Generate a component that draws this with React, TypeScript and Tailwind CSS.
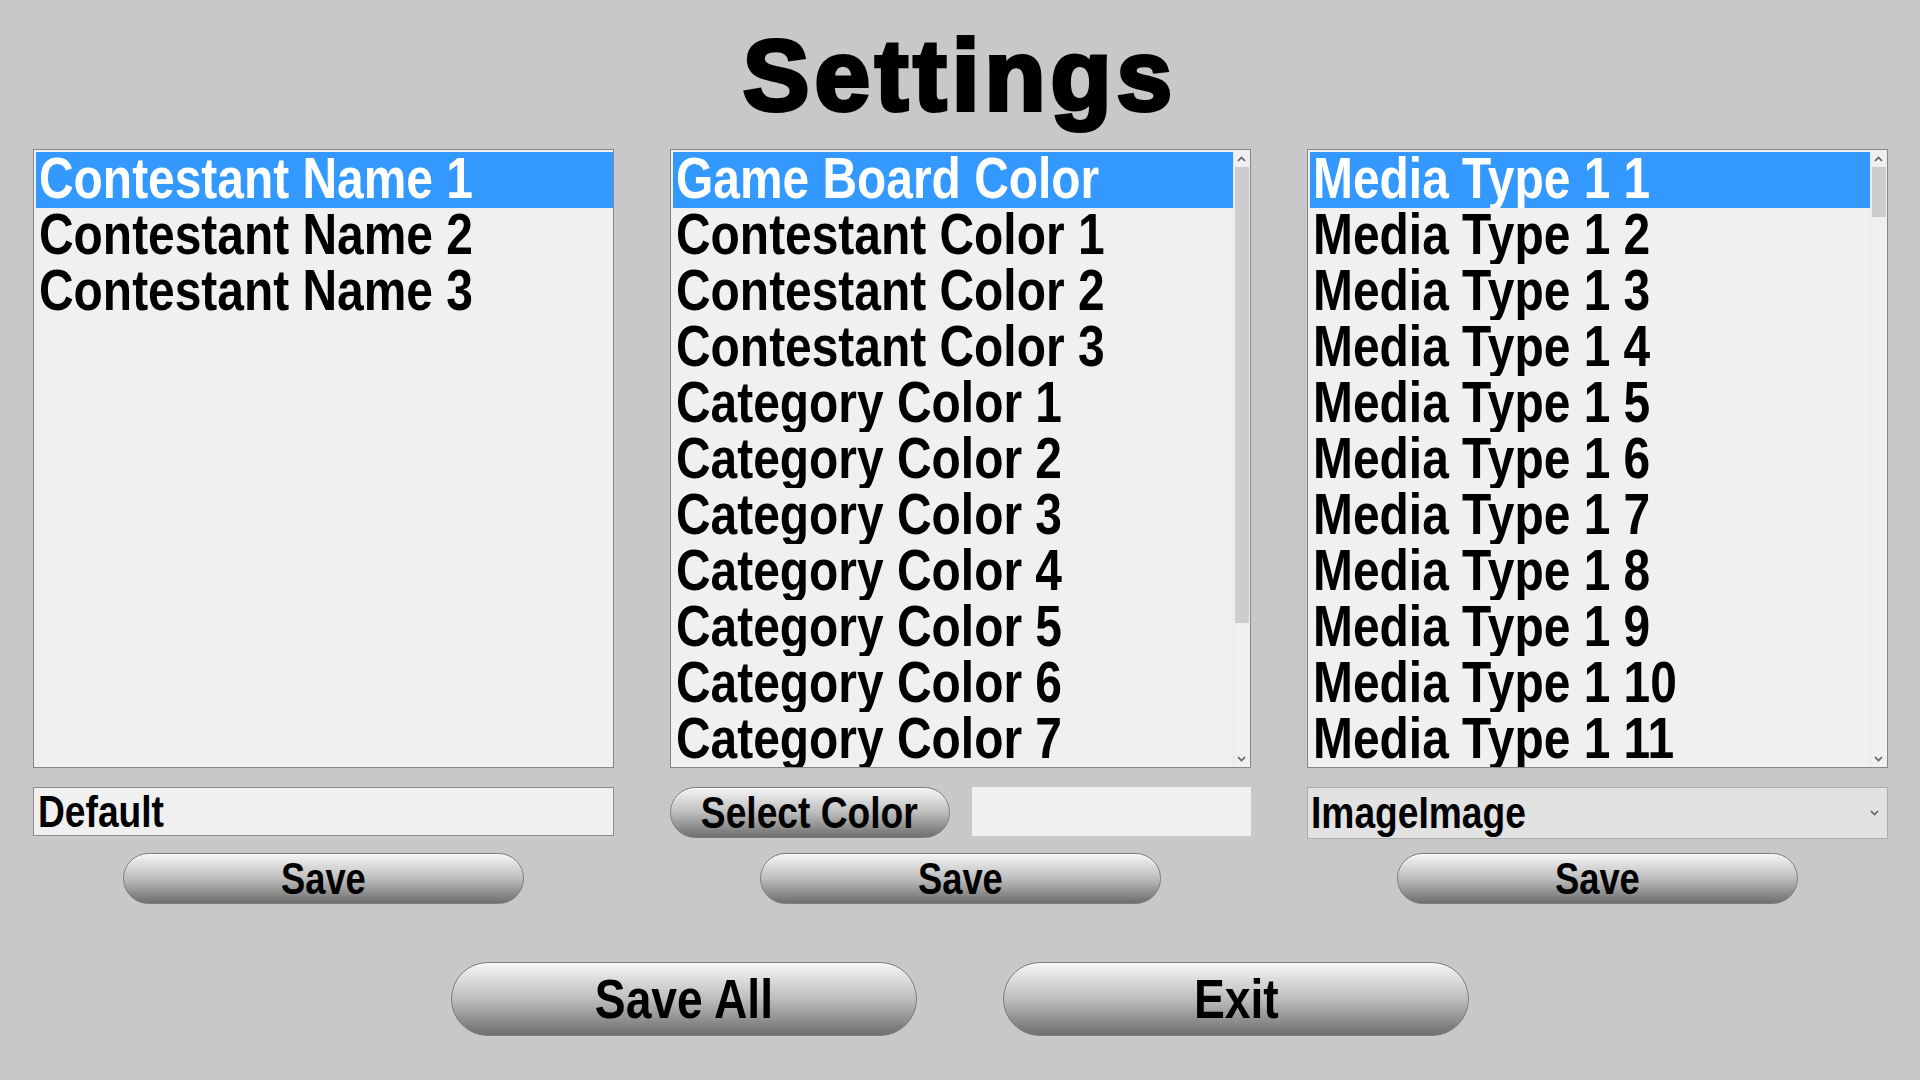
import React from 'react';

const font = "font-['Liberation_Sans',Arial,sans-serif] font-bold";

// the reference uses a condensed bold face; squeeze Liberation Sans to match its widths
const Narrow = ({ children, center }: { children: React.ReactNode; center?: boolean }) => (
  <span className={`inline-block scale-x-[0.826] ${center ? 'origin-center' : 'origin-left'}`}>{children}</span>
);

const Chevron = ({ up }: { up?: boolean }) => (
  <svg width="9" height="6" viewBox="0 0 9 6" className="text-[#606060]">
    <path d={up ? 'M1 5 L4.5 1.5 L8 5' : 'M1 1 L4.5 4.5 L8 1'} fill="none" stroke="currentColor" strokeWidth="1.6" />
  </svg>
);

const ScrollBar = ({ thumb }: { thumb: number }) => (
  <div className="w-[17px] h-full flex flex-col bg-[#f0f0f0] border-l border-[#e8e8e8]">
    <div className="h-[17px] flex items-center justify-center"><Chevron up /></div>
    <div className="flex-1 px-[1px]">
      <div className="bg-[#cdcdcd] w-full" style={{ height: thumb }} />
    </div>
    <div className="h-[17px] flex items-center justify-center"><Chevron /></div>
  </div>
);

const ListBox = ({ items, thumb }: { items: string[]; thumb?: number }) => (
  <div className="h-[619px] border border-[#828790] bg-[#f0f0f0] flex overflow-hidden">
    <div className="flex-1 pt-[2px] pl-[2px] overflow-hidden">
      {items.map((t, i) => (
        <div
          key={t}
          className={`h-[56px] leading-[52px] pl-[3px] text-[58px] whitespace-nowrap overflow-hidden ${font} ${
            i === 0 ? 'bg-[#3399ff] text-white' : 'text-black'
          }`}
        >
          <Narrow>{t}</Narrow>
        </div>
      ))}
    </div>
    {thumb !== undefined && <ScrollBar thumb={thumb} />}
  </div>
);

const PillButton = ({ label, className, text }: { label: string; className: string; text: string }) => (
  <button
    className={`rounded-full border border-[#7c7c7c] bg-gradient-to-b from-[#f6f6f6] via-[#bdbdbd] to-[#6f6f6f] text-black shadow-[inset_0_1px_0_rgba(255,255,255,0.6)] whitespace-nowrap ${font} ${text} ${className}`}
  >
    <Narrow center>{label}</Narrow>
  </button>
);

export default function App() {
  const contestants = ['Contestant Name 1', 'Contestant Name 2', 'Contestant Name 3'];
  const colors = [
    'Game Board Color',
    'Contestant Color 1',
    'Contestant Color 2',
    'Contestant Color 3',
    'Category Color 1',
    'Category Color 2',
    'Category Color 3',
    'Category Color 4',
    'Category Color 5',
    'Category Color 6',
    'Category Color 7',
    'Category Color 8',
  ];
  const media = Array.from({ length: 14 }, (_, i) => `Media Type 1 ${i + 1}`);

  return (
    <div className="w-[1920px] h-[1080px] bg-[#c8c8c8] flex flex-col items-center overflow-hidden">
      <h1 className="pt-[25px] text-[100px] leading-[100px] font-black tracking-[5px] text-black font-['Liberation_Sans',Arial,sans-serif] [-webkit-text-stroke:4px_black]">
        Settings
      </h1>

      <div className="mt-[24px] flex gap-[56px]">
        <div className="w-[581px] flex flex-col">
          <ListBox items={contestants} />
          <div className={`mt-[19px] h-[49px] border border-[#8c8c8c] bg-[#f0f0f0] pl-[4px] text-[45px] leading-[47px] text-black overflow-hidden ${font}`}>
            <Narrow>Default</Narrow>
          </div>
          <PillButton label="Save" className="mt-[17px] self-center w-[401px] h-[51px]" text="text-[44px] leading-[49px]" />
        </div>

        <div className="w-[581px] flex flex-col">
          <ListBox items={colors} thumb={456} />
          <div className="mt-[19px] h-[51px] flex items-start gap-[22px]">
            <PillButton label="Select Color" className="w-[280px] h-[51px] overflow-hidden" text="text-[45px] leading-[49px]" />
            <div className="flex-1 h-[49px] bg-[#f0f0f0]" />
          </div>
          <PillButton label="Save" className="mt-[15px] self-center w-[401px] h-[51px]" text="text-[44px] leading-[49px]" />
        </div>

        <div className="w-[581px] flex flex-col">
          <ListBox items={media} thumb={50} />
          <div className={`mt-[19px] h-[52px] border border-[#adadad] bg-[#e2e2e2] pl-[3px] pr-[8px] flex items-center justify-between text-[45px] text-black ${font}`}>
            <span className="leading-[50px]"><Narrow>ImageImage</Narrow></span>
            <Chevron />
          </div>
          <PillButton label="Save" className="mt-[14px] self-center w-[401px] h-[51px]" text="text-[44px] leading-[49px]" />
        </div>
      </div>

      <div className="mt-[58px] flex gap-[86px]">
        <PillButton label="Save All" className="w-[466px] h-[74px]" text="text-[56px] leading-[72px]" />
        <PillButton label="Exit" className="w-[466px] h-[74px]" text="text-[56px] leading-[72px]" />
      </div>
    </div>
  );
}
